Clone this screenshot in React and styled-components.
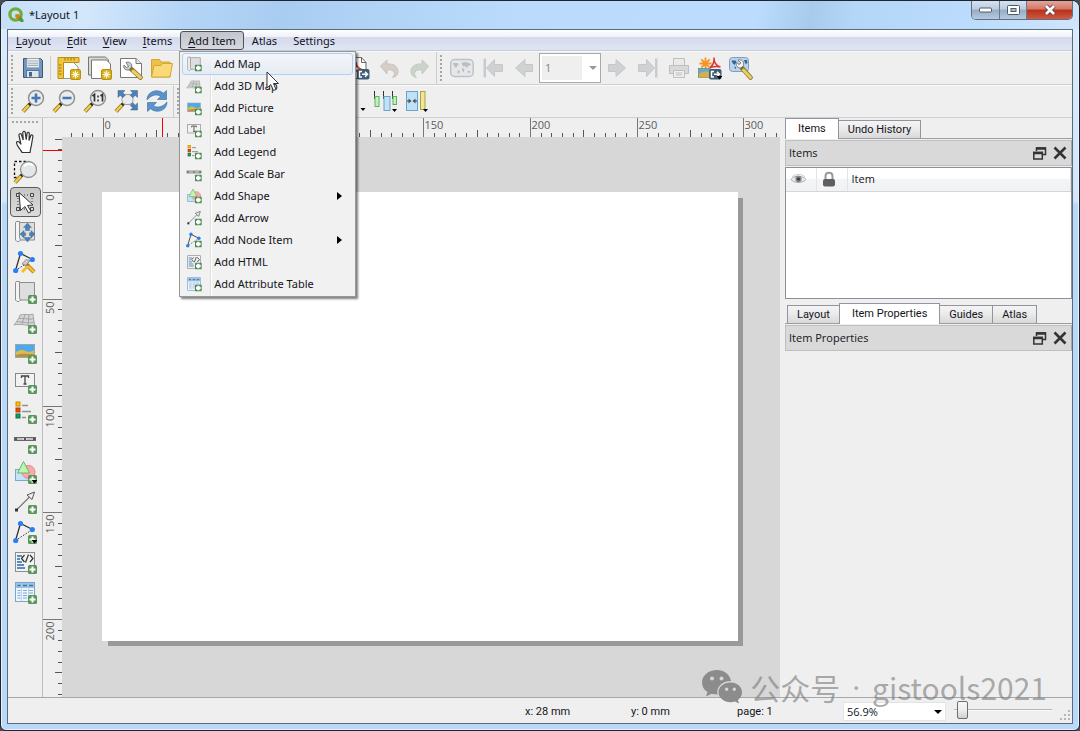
import React from "react";
import styled, { createGlobalStyle, css } from "styled-components";

const GlobalStyle = createGlobalStyle`
  * {
    box-sizing: border-box;
  }

  body {
    margin: 0;
    background: #4a4e55;
    color: #14141c;
    font-family: "Open Sans", "Noto Sans", sans-serif;
    font-size: 11px;
    line-height: 16px;
  }

  button,
  input,
  select {
    font: inherit;
    color: inherit;
  }
`;

const Window = styled.div`
  display: flex;
  flex-direction: column;
  min-height: 100vh;
  padding: 0 6px 6px;
  border: 1px solid #20242c;
  border-radius: 8px 8px 6px 6px;
  background: linear-gradient(180deg, #d9ebfc 0, #d3e7fb 200px, #b8d8f8 204px, #b8d9f9 100%);
  box-shadow: inset 0 0 0 1px #e6f3ff;
  overflow: hidden;
`;

const TitleBar = styled.header`
  display: flex;
  align-items: flex-start;
  height: 28px;
  margin: 0 -6px;
  padding: 0 6px 0 7px;
  background: linear-gradient(
    100deg,
    #c5dff9 0%,
    #d3e7fb 8%,
    #b4d5f6 17%,
    #a9cdf1 26%,
    #b0d3f6 35%,
    #badbfb 48%,
    #bbdcfc 70%,
    #a8cbec 75%,
    #b4d6f7 79%,
    #bbdcfc 90%,
    #cfe5fb 100%
  );
`;

const Title = styled.h1`
  display: flex;
  align-items: center;
  gap: 5px;
  flex: 1;
  height: 28px;
  margin: 0;
  font-family: "Noto Sans", sans-serif;
  font-size: 11px;
  font-weight: 400;
`;

const Controls = styled.div`
  display: flex;
  border: 1px solid #5f7083;
  border-top: none;
  border-radius: 0 0 5px 5px;
  overflow: hidden;
`;

const ControlButton = styled.button`
  display: flex;
  align-items: center;
  justify-content: center;
  width: ${(p) => (p.$close ? "46px" : "27px")};
  height: 18px;
  padding: 0;
  border: none;
  border-left: ${(p) => (p.$first ? "none" : "1px solid #6a7a8c")};
  background: ${(p) =>
    p.$close
      ? "linear-gradient(180deg, #e3a598 0%, #d5776a 45%, #b8301c 50%, #cf5a40 100%)"
      : "linear-gradient(180deg, #d5e2ef 0%, #bccde0 45%, #97adc5 50%, #b5cae0 100%)"};
`;

const Client = styled.div`
  display: flex;
  flex-direction: column;
  flex: 1;
  border: 1px solid #5d6a78;
  background: #efefef;
`;

const MenuBar = styled.nav`
  display: flex;
  height: 21px;
  background: linear-gradient(180deg, #ffffff 0%, #eef1f8 33%, #d5daec 36%, #dfe4f3 95%);
  border-bottom: 1px solid #c9cbd2;
  font-family: "Noto Sans", sans-serif;
`;

const MenuSlot = styled.div`
  position: relative;
  padding-top: 1px;
`;

const MenuButton = styled.button`
  height: 19px;
  padding: 0 7px;
  border: 1px solid transparent;
  border-radius: 3px;
  background: none;

  ${(p) =>
    p.$open &&
    css`
      border-color: #4f5058;
      background: linear-gradient(180deg, #c3c5cd 0%, #d6d8e0 100%);
    `}

  u {
    text-underline-offset: 2px;
  }
`;

const Menu = styled.ul`
  position: absolute;
  z-index: 5;
  top: 21px;
  left: -1px;
  width: 177px;
  margin: 0;
  padding: 1px 2px;
  list-style: none;
  border: 1px solid #979797;
  background: linear-gradient(90deg, #f1f1f1 30px, #e0e0e0 30px, #e0e0e0 31px, #ffffff 31px, #ffffff 32px, #f1f1f1 32px);
  box-shadow: 2px 2px 2px rgba(0, 0, 0, 0.5);
`;

const MenuItem = styled.button`
  display: flex;
  align-items: center;
  gap: 12px;
  width: 100%;
  height: 22px;
  padding: 0 10px 0 3px;
  border: 1px solid ${(p) => (p.$active ? "#aecff7" : "transparent")};
  border-radius: 3px;
  background: ${(p) =>
    p.$active ? "linear-gradient(180deg, rgba(244, 247, 251, 0.8), rgba(226, 234, 244, 0.8))" : "none"};
  text-align: left;
`;

const MenuText = styled.span`
  flex: 1;
`;

const Pointer = styled.svg`
  position: absolute;
  z-index: 6;
  top: 41px;
  left: 86px;
`;

const Toolbar = styled.div`
  display: flex;
  align-items: center;
  height: ${(p) => (p.$last ? "33px" : "34px")};
  border-bottom: 1px solid #cfcfcf;
  box-shadow: inset 0 1px 0 #fafafa;
`;

const Grip = styled.span`
  width: 3px;
  height: 26px;
  margin: 0 3px;
  background: radial-gradient(circle at 1px 1px, #a6a6a6 1px, transparent 1px) 0 0 / 3px 4px;
`;

const Divider = styled.span`
  width: 1px;
  height: ${(p) => (p.$tall ? "32px" : "24px")};
  margin: ${(p) => (p.$tall ? "0 0 0 1px" : "0 2px")};
  background: #cdcdcd;
`;

const ToolButton = styled.button`
  display: flex;
  align-items: center;
  justify-content: center;
  width: 31px;
  height: 30px;
  padding: 0;
  border: 1px solid transparent;
  border-radius: 4px;
  background: none;

  ${(p) =>
    p.$pressed &&
    css`
      border-color: #5b5b5b;
      background: linear-gradient(180deg, #c6c6c6 0%, #dcdcdc 100%);
    `}

  &:disabled {
    opacity: 0.5;
  }
`;

const SelectBox = styled.label`
  display: flex;
  position: relative;
  width: ${(p) => p.$width};
  height: ${(p) => p.$height};
  border: 1px solid ${(p) => p.$border};
  background: #ffffff;

  &::after {
    content: "";
    position: absolute;
    top: 50%;
    right: 3px;
    margin-top: -2px;
    border: 4px solid transparent;
    border-top-color: ${(p) => p.$arrow};
    border-bottom: none;
    pointer-events: none;
  }
`;

const Select = styled.select`
  appearance: none;
  width: 100%;
  margin: ${(p) => (p.$inset ? "2px 18px 2px 2px" : "0")};
  padding: 0 3px;
  border: none;
  background: ${(p) => (p.$inset ? "#efefef" : "transparent")};
  color: ${(p) => (p.$inset ? "#8c8070" : "#14141c")};
  opacity: 1;
`;

const Main = styled.main`
  display: flex;
  flex: 1;
`;

const SideBar = styled.div`
  display: flex;
  flex-direction: column;
  align-items: center;
  width: 35px;
  border-right: 1px solid #bdbdbd;
`;

const SideGrip = styled.span`
  width: 27px;
  height: 3px;
  margin: 3px 0;
  background: radial-gradient(circle at 1px 1px, #a6a6a6 1px, transparent 1px) 0 0 / 4px 3px;
`;

const View = styled.div`
  display: grid;
  grid-template: 19px 1fr / 19px 1fr;
  flex: 1;
  min-width: 0;
`;

const RulerSvg = styled.svg`
  display: block;
  width: 100%;
  height: 100%;
  min-width: 0;
  min-height: 0;
  font-size: 11px;
  fill: #5c5c5c;
  overflow: hidden;
`;

const Canvas = styled.div`
  padding: 55px 40px 50px;
  background: #d7d7d7;
  overflow: hidden;
`;

const Paper = styled.div`
  width: 636px;
  height: 449px;
  background: #ffffff;
  box-shadow: 5px 5px 0 #999999;
  clip-path: polygon(0 0, 100% 0, 100% 6px, 110% 6px, 110% 110%, 6px 110%, 6px 100%, 0 100%);
`;

const Dock = styled.aside`
  display: flex;
  flex-direction: column;
  width: 287px;
  margin-left: 5px;
`;

const Tabs = styled.div`
  display: flex;
  align-items: flex-end;
  height: 21px;
  margin-bottom: 1px;
  padding-left: ${(p) => (p.$indent ? "2px" : "0")};
  border-bottom: 1px solid #9c9ca4;
  font-family: Roboto, sans-serif;
`;

const Tab = styled.button`
  height: ${(p) => (p.$active ? "21px" : "18px")};
  margin-bottom: ${(p) => (p.$active ? "-1px" : "0")};
  margin-right: -1px;
  padding: 0 ${(p) => (p.$active ? "12px" : "9px")};
  border: 1px solid #9494a0;
  border-bottom: none;
  background: ${(p) => (p.$active ? "#ffffff" : "linear-gradient(180deg, #f4f4f4 0%, #ebebeb 45%, #d9d9d9 100%)")};
`;

const DockTitle = styled.div`
  display: flex;
  align-items: center;
  gap: 6px;
  height: 26px;
  padding: 0 4px 0 3px;
  border: 1px solid #bfbfbf;
  border-right-color: #a8a8a8;
  background: #d9d9d9;
`;

const DockName = styled.h2`
  flex: 1;
  margin: 0;
  font-size: 11px;
  font-weight: 400;
`;

const IconButton = styled.button`
  display: flex;
  padding: 0;
  border: none;
  background: none;
`;

const Tree = styled.div`
  height: 132px;
  margin: 1px 0 4px;
  border: 1px solid #8b8f98;
  background: #ffffff;
`;

const ItemTable = styled.table`
  width: 100%;
  border-collapse: collapse;
`;

const HeadCell = styled.th`
  width: ${(p) => p.$width || "auto"};
  height: 23px;
  padding: 0 4px;
  border-right: 1px solid #e3e4e6;
  border-bottom: 1px solid #d5d5d5;
  background: linear-gradient(180deg, #ffffff 0%, #ffffff 45%, #f3f4f6 50%, #f1f2f4 100%);
  font-weight: 400;
  text-align: left;

  svg {
    display: block;
  }
`;

const StatusBar = styled.footer`
  display: flex;
  align-items: center;
  justify-content: flex-end;
  height: 26px;
  padding-top: 2px;
  border-top: 1px solid #a3a8ae;
`;

const StatusText = styled.span`
  width: 106px;
  font-family: Roboto, sans-serif;
`;

const ZoomSlider = styled.input`
  appearance: none;
  width: 98px;
  height: 18px;
  margin: 0 8px 4px;
  background: linear-gradient(180deg, transparent 8px, #b5b5b5 8px, #b5b5b5 9px, #fafafa 9px, #fafafa 10px, transparent 10px);

  &::-webkit-slider-thumb {
    appearance: none;
    width: 11px;
    height: 18px;
    border: 1px solid #6d6d6d;
    border-radius: 2px;
    background: linear-gradient(180deg, #f7f7f7 0%, #eeeeee 50%, #cfcfcf 100%);
  }
`;

const Watermark = styled.div`
  position: absolute;
  z-index: 4;
  right: 33px;
  bottom: 22px;
  display: flex;
  align-items: center;
  gap: 8px;
  color: rgba(120, 120, 120, 0.6);
  font-family: "Noto Sans CJK SC", sans-serif;
  font-size: 30px;
  line-height: 44px;
  pointer-events: none;
`;

const Account = styled.span`
  display: flex;
  gap: 12px;
`;

const Dot = styled.span`
  font-family: "Open Sans", sans-serif;
`;

function Plus({ solid = true }) {
  return solid ? (
    <g>
      <rect x="15" y="15" width="9" height="9" rx="1.5" fill="#5a965a" />
      <path d="M19.5 16.5v6M16.5 19.5h6" stroke="#fff" strokeWidth="2" />
    </g>
  ) : (
    <g>
      <rect x="13.5" y="13" width="10" height="10" rx="1" fill="#4d8b55" />
      <path d="M18.5 14.5v7M15 18h7" stroke="#fff" strokeWidth="3.6" />
    </g>
  );
}

const Drop = () => <path d="M18.5 20h6l-3 3.5z" fill="#000" />;

const Handle = () => (
  <g>
    <path d="M9 15 2 22.5" stroke="#8a6d1c" strokeWidth="4" />
    <path d="M8 16 2 22.5" stroke="#f4cf4a" strokeWidth="2.4" />
    <path d="M10.5 13.5 8 16" stroke="#222" strokeWidth="3" />
  </g>
);

const Lens = () => (
  <g>
    <Handle />
    <circle cx="15" cy="9" r="7.5" fill="#e9ebec" stroke="#8e9294" strokeWidth="1.5" />
  </g>
);

const Star = () => (
  <g>
    <rect x="13.5" y="13.5" width="10" height="10" rx="1.5" fill="#d5ac1e" stroke="#b8920f" />
    <path d="M18.5 14.5v8M14.5 18.5h8M15.8 15.8l5.4 5.4M21.2 15.8l-5.4 5.4" stroke="#fff7d0" strokeWidth="1.2" />
  </g>
);

const Export = () => (
  <g>
    <rect x="11" y="13" width="12.5" height="10.5" rx="2" fill="#3f5d76" />
    <path d="M16 15.5h-2.5v5.5h2.500M16 18.3h5M19 15.8l2.5 2.5-2.5 2.5" fill="none" stroke="#fff" strokeWidth="1.5" />
  </g>
);

const Nodes = () => (
  <g>
    <path d="M2.5 20.5 7.5 3.5 19.5 9.5" fill="none" stroke="#333" strokeWidth="1.3" />
    <path d="M2.5 20.5 19.5 9.5" stroke="#333" strokeWidth="1" strokeDasharray="1.5 1.5" />
    <circle cx="2.7" cy="20.5" r="2.6" fill="#2a7ff0" />
    <circle cx="7.5" cy="3.5" r="2.6" fill="#2a7ff0" />
    <circle cx="19.3" cy="9.5" r="2.6" fill="#2a7ff0" />
  </g>
);

const MapSheet = () => (
  <g stroke="#8e8e8e">
    <path d="M6.5 2.5h15v17.5h-15z" fill="#dedede" />
    <path d="M3 1.5h3.5v16l1 2.5-1.5 1.5H4L2.5 20V2.5z" fill="#f4f4f4" />
  </g>
);

const World = () => (
  <g>
    <rect x="0.7" y="3.5" width="22.5" height="17" rx="4" fill="#dde1e4" stroke="#8f979e" strokeWidth="1.5" />
    <path
      d="M3 7h4l2 1-2 2-1 2-2-2zM8 14l2 1-1 3-1.5-1.5zM11.5 7l3-1 5 1 1.5 2-3 1-1 2-2-2-2 .5zM12 12l2.5 1-1 3.5-1.5-2zM18 14.5l2.5 1-1 1.5-2-.5z"
      fill="#848e96"
    />
  </g>
);

const ArrowLeft = () => <path d="M3.5 12 13 3.5v5h7.5v7H13v5z" fill="#b0b5b9" stroke="#9da3a8" />;

const ToEnd = () => (
  <g>
    <path d="M2.5 2.5h2.5v19H2.5z" fill="#a5abb0" />
    <path d="m5.5 12 8-8.500v5h8v7h-8v5z" fill="#b0b5b9" stroke="#9da3a8" />
  </g>
);

const glyphs = {
  save: (
    <g>
      <path d="M2.5 2.5h17l2 2v17h-19z" fill="#6c98c6" stroke="#44566b" />
      <rect x="6" y="2.5" width="12" height="9" fill="#eef1f4" stroke="#9aa7b5" strokeWidth=".6" />
      <path d="M7 5h10M7 7.2h10M7 9.4h10" stroke="#a4abb4" strokeWidth="1.1" />
      <rect x="5.5" y="14.5" width="12.5" height="7" fill="#dfe4ea" stroke="#52667e" strokeWidth=".8" />
      <rect x="8" y="16" width="3" height="4.5" fill="#3f6596" />
    </g>
  ),
  newLayout: (
    <g>
      <path d="M6.5 6.5h10l4.5 4.5v11.5H6.5z" fill="#fff" stroke="#999" />
      <path d="M1 1.5h21v5H6.5v16H1z" fill="#f1c53b" stroke="#b98e16" />
      <path d="M8 2v2.5M11 2v2.5M14 2v2.5M17 2v2.5M2 9h2.5M2 12h2.5M2 15h2.5M2 18h2.5" stroke="#9c7508" />
      <Star />
    </g>
  ),
  duplicate: (
    <g>
      <path d="M.5 1h17l3 3v15H.5z" fill="#d8d8d8" stroke="#777" />
      <path d="M3.5 4h15l4 4v14.5h-19z" fill="#fff" stroke="#777" />
      <Star />
    </g>
  ),
  manager: (
    <g>
      <path d="M1.5 2.5h15.5l5.5 5v14h-21z" fill="#fff" stroke="#777" />
      <path d="M17 2.5v5h5.5" fill="#e5e5e5" stroke="#777" />
      <path d="m11 12 10.5 9.5" stroke="#8c7321" strokeWidth="4.5" strokeLinecap="round" />
      <path d="m14 15 7.5 6.5" stroke="#ebce68" strokeWidth="3" strokeLinecap="round" />
      <path d="M7 6.5c3.5-1.5 6.5 1 5.5 5l-3 2.5C6 14.5 4 12 5 9l2.5 2.5 2-1z" fill="#c9ced3" stroke="#666" strokeWidth=".8" />
    </g>
  ),
  folder: (
    <g stroke="#d3a730">
      <path d="M1.5 21V3.5h8l1.5 2.5h9v15z" fill="#eec04a" />
      <path d="M1.5 21 4 9.5h7l1.5-2h10L20 21z" fill="#f9d978" />
    </g>
  ),
  pdf: (
    <g>
      <path d="M3.5 1.5h12l4.5 5v16H3.5z" fill="#fff" stroke="#666" />
      <path d="M15.5 1.5v5H20" fill="none" stroke="#666" />
      <path d="M5 18c4-4 5-8 5-12 0 5 4 8 9 8-5-1-10 1-14 4z" fill="none" stroke="#d8322a" strokeWidth="1.5" />
      <Export />
    </g>
  ),
  undo: (
    <path d="M3.5 10 10 4v4c7-.5 11 2.5 11 7.5 0 3-2 5.5-5.5 6 2-2 2.5-4 1.5-5.5-1-2-3.5-2.5-7-2v4z" fill="#c0aca0" stroke="#a5978e" />
  ),
  redo: (
    <path d="M20.5 10 14 4v4C7 7.5 3 10.5 3 15.5c0 3 2 5.5 5.5 6-2-2-2.5-4-1.5-5.5 1-2 3.5-2.5 7-2v4z" fill="#a9bba8" stroke="#97a297" />
  ),
  world: <World />,
  first: <ToEnd />,
  prev: <ArrowLeft />,
  next: (
    <g transform="matrix(-1 0 0 1 24 0)">
      <ArrowLeft />
    </g>
  ),
  last: (
    <g transform="matrix(-1 0 0 1 24 0)">
      <ToEnd />
    </g>
  ),
  print: (
    <g stroke="#8f8f8f">
      <path d="M6.5 2.5h11v7h-11z" fill="#e6e6e6" />
      <path d="M2.5 9.5h19v8h-19z" fill="#c5c5c5" />
      <path d="M6.5 14.5h11v7h-11z" fill="#f3f3f3" />
      <path d="M8.5 17h7M8.5 19h7" />
    </g>
  ),
  exportAtlas: (
    <g>
      <path d="M7.5 1.5v12M1.5 7.5h12M3.3 3.3l8.4 8.4M11.7 3.3 3.3 11.7" stroke="#f5941e" strokeWidth="1.8" />
      <path d="M12 11.5c4-3 4.5-6 4-10 0 5 2.5 8.500 6.5 9.5-4-1-7-.5-10.5.5z" fill="none" stroke="#e3342a" strokeWidth="1.5" />
      <rect x=".5" y="12.5" width="12" height="9" fill="#5aaade" stroke="#7d7040" strokeWidth=".6" />
      <path d="M1 18c3-3 7-3 11-2v5.500H1z" fill="#d3b04a" />
      <Export />
      <Drop />
    </g>
  ),
  atlasSettings: (
    <g>
      <rect x=".5" y="1.5" width="19" height="14" rx="3" fill="#b9d3ec" stroke="#7d9fc0" />
      <path d="M2.5 4.5h4l1 1.500-2 3-2-2zM5 10.500l2 .5-.5 2.500zM15 4h3l.5 3-2 1z" fill="#39638f" />
      <path d="m13 12 8.5 9.5" stroke="#8a741f" strokeWidth="4.5" strokeLinecap="round" />
      <path d="m14.5 14 7 7.5" stroke="#e9cf6a" strokeWidth="3" strokeLinecap="round" />
      <path d="M9 4c3.5-1 6.5 1.500 5.5 5.500L12 12c-3.5 0-5.5-2.5-4.5-5.500L10 8.500 12 7z" fill="#f2f4f6" stroke="#666" strokeWidth=".8" />
    </g>
  ),
  zoomIn: (
    <g>
      <Lens />
      <path d="M15 4.5v9M10.5 9h9" stroke="#4279b4" strokeWidth="2.6" />
    </g>
  ),
  zoomOut: (
    <g>
      <Lens />
      <path d="M10.5 9h9" stroke="#4279b4" strokeWidth="2.6" />
    </g>
  ),
  zoomActual: (
    <g>
      <Lens />
      <path d="m9.5 7 2-1.500v7M17.5 7l2-1.500v7" fill="none" stroke="#333" strokeWidth="1.7" />
      <path d="M14.3 6.5h1.500v2h-1.500zM14.3 10.500h1.500v2h-1.500z" fill="#333" />
    </g>
  ),
  zoomFull: (
    <g>
      <Handle />
      <rect x="8" y="5.5" width="11" height="10" rx="4" fill="#e9ebec" stroke="#9a9d9f" />
      <path
        d="M4 1.5h7L8.8 3.7l2.5 2.5-2.6 2.6-2.5-2.5L4 8.5zM23.5 1.5h-7l2.2 2.2-2.5 2.5 2.6 2.6 2.5-2.5 2.2 2.2zM23.5 21h-7l2.2-2.2-2.5-2.5 2.6-2.6 2.5 2.5 2.2-2.2z"
        fill="#4d80b5"
        stroke="#34618f"
        strokeWidth=".5"
      />
    </g>
  ),
  refresh: (
    <g fill="#5a93cb" stroke="#376b9f" strokeWidth=".6">
      <path d="M2 11C2 5 7 1.500 12 1.800c2.800.1 4.800 1 6.300 2.500L21.500 1.500v9h-9L15.500 7.500C12 4.500 6 6 2 11z" />
      <path d="M22 13c0 6-5 9.500-10 9.200-2.800-.1-4.800-1-6.300-2.500L2.500 22.500v-9h9l-3 3C12 19.500 18 18 22 13z" />
    </g>
  ),
  align: (
    <g>
      <rect x="4" y="4" width="8" height="6" fill="#b9dff5" stroke="#6e93a8" />
      <rect x="4" y="12" width="6" height="6" fill="#bdf0b8" stroke="#62a561" />
      <path d="M18.5 19h5l-2.5 3z" fill="#000" />
    </g>
  ),
  distribute: (
    <g>
      <path d="M1.5 2v8M10.5 2v8M19.5 2v8" stroke="#333" />
      <rect x="2" y="7.5" width="4" height="10" fill="#bff2bc" stroke="#62b162" />
      <rect x="11" y="7.5" width="6" height="14" fill="#bfe2f8" stroke="#6ba3c7" />
      <rect x="20" y="7.5" width="3.5" height="8" fill="#bff2bc" stroke="#62b162" />
      <path d="M19 20h5l-2.5 3z" fill="#000" />
    </g>
  ),
  resize: (
    <g>
      <rect x="2.5" y="2.5" width="11" height="19" fill="#bfe2f8" stroke="#6ba3c7" />
      <path d="M3 12h3.5M13 12H9.5" stroke="#333" />
      <path d="M4.5 9.5 7.5 12l-3 2.500zM11.500 9.500l-3 2.500 3 2.500z" fill="#555" />
      <rect x="16.5" y="2.5" width="4.5" height="18" fill="#efe791" stroke="#a8a055" />
      <path d="M19 20h5l-2.5 3z" fill="#000" />
    </g>
  ),
  pan: (
    <path
      d="M9 22.5c-1-3-5-6-5.5-9.5-.3-1.6 1.7-2 2.7-.8L8 14.5 6 5.5c-.4-2 2-2.5 2.500-.8L10.200 10 9.800 3C9.700 1 12 .8 12.300 2.600l.9 7L14 3.500c.2-1.700 2.300-1.500 2.300.3L16 10.500l1.700-4.700c.6-1.500 2.500-.9 2.200.7L18.600 14c-.3 3-1.300 4.500-1.500 8.500z"
      fill="#fff"
      stroke="#333"
      strokeWidth="1.2"
    />
  ),
  zoomTool: (
    <g>
      <path d="M13 1.5H1.5v16H8" fill="none" stroke="#111" strokeDasharray="2.5 2" strokeWidth="1.3" />
      <Handle />
      <circle cx="15.5" cy="9.5" r="8" fill="#e4e7e7" stroke="#8e9294" strokeWidth="1.3" />
      <path d="M11 6.5c2-3 7-3.5 9-.5" fill="none" stroke="#fff" strokeWidth="2" />
    </g>
  ),
  selectTool: (
    <g>
      <path d="M5 5h14M5 19h14M5 5v14M19 5v14" stroke="#333" strokeDasharray="1 2" />
      <path d="M3.5 3.5h3v3h-3zM17.5 3.5h3v3h-3zM3.5 17.5h3v3h-3zM17.5 17.5h3v3h-3z" fill="#ddd" stroke="#444" />
      <path d="m6 2.5 14 12.5-5.5.5 3.5 6-2.5 1.500-3.5-6.500-4.500 4z" fill="#fff" stroke="#333" />
    </g>
  ),
  moveContent: (
    <g>
      <MapSheet />
      <path
        d="m14.5 3 4 4.500h-2v3h-4v-3h-2zM14.500 22l-3.500-4.500h7zM7 14l4-3.500v2.300h1.500v3H11V18zM22 14l-4-3.500v2.300h-1.500v3H18V18z"
        fill="#4d80b5"
        stroke="#34618f"
        strokeWidth=".4"
      />
    </g>
  ),
  editNodes: (
    <g>
      <Nodes />
      <path d="m12 13 9 9" stroke="#a06d10" strokeWidth="4" />
      <path d="m15 16 6 6M9 22l6-6" stroke="#f2bd35" strokeWidth="2.8" />
      <path d="m9 14 4-4.500 4 1-4 5z" fill="#ccc" stroke="#777" strokeWidth=".7" />
    </g>
  ),
  map: <MapSheet />,
  map3d: (
    <g stroke="#999" strokeWidth=".8">
      <path d="M7 5c5-2 9 1 13-1l1.500 11c-6 2-12-2-20.500 0C3 12 6 9 7 5z" fill="#d5d5d5" />
      <path d="M6 8.500c5-1 10 2 14.500 0M3.500 12c6-1 12 2.500 17.500 0M12 4.500 9 14M16 5l-1 11" fill="none" />
    </g>
  ),
  picture: (
    <g>
      <rect x="2.5" y="4.5" width="19" height="13" fill="#4ba9ec" stroke="#9aa6ae" />
      <path d="M3 12c4-3 8-2.500 11-.5 3 1 5-.5 7-1V17H3z" fill="#d9ba55" />
      <path d="M3 15c5-2 12-1 18-1v3H3z" fill="#b5913c" />
    </g>
  ),
  label: (
    <g>
      <rect x="2.5" y="3.5" width="19" height="13" fill="#f2f2f2" stroke="#888" />
      <path d="M8.5 8V6h7v2M12 6v8M10.5 14h3" fill="none" stroke="#444" strokeWidth="1.3" />
    </g>
  ),
  legend: (
    <g>
      <rect x="3" y="2" width="4" height="4" fill="#ffc000" stroke="#c88d00" />
      <rect x="3" y="8" width="4" height="4" fill="#ee4b10" stroke="#b33a0c" />
      <rect x="3" y="14" width="4" height="4" fill="#10a060" stroke="#0a7544" />
      <path d="M9 5.500h6M9 11.500h9M9 17.500h4" stroke="#8f8f8f" strokeWidth="1.5" />
    </g>
  ),
  scalebar: (
    <g>
      <rect x="1.5" y="7.5" width="21" height="3" fill="#ddd" stroke="#666" />
      <path d="M4 9h6M14 9h6" stroke="#aaa" strokeWidth="1" />
      <path d="M2 9h2M11 9h2M20 9h2" stroke="#555" strokeWidth="2" />
    </g>
  ),
  shape: (
    <g>
      <rect x="2.5" y="9.5" width="13" height="11" fill="#c4e3f9" stroke="#7ca9cb" />
      <circle cx="15.5" cy="12" r="6.5" fill="#f9aaaa" stroke="#e28787" />
      <path d="m10.5 1.500 6 11.500h-12z" fill="#bdf5b4" stroke="#6ab567" />
    </g>
  ),
  arrow: (
    <g>
      <path d="M3.5 20 17.5 6" stroke="#777" strokeWidth="1.2" />
      <path d="m21.5 2-2.500 7.500-5-4.500z" fill="#eee" stroke="#555" />
      <rect x="2" y="18.5" width="3" height="3" fill="#333" />
    </g>
  ),
  nodes: <Nodes />,
  html: (
    <g>
      <rect x="2.5" y="2.5" width="19" height="19" fill="#f2f2f2" stroke="#8d8d8d" />
      <path d="M4 6h5M4 9h3M4 12h5M4 15h7M4 18h8" stroke="#5b8cc0" strokeWidth="1.8" />
      <path d="m11.5 5-3 3.500 3 3.500M17 5l3 3.500-3 3.500M15.500 4.500l-3 8" fill="none" stroke="#333" strokeWidth="1.2" />
    </g>
  ),
  table: (
    <g>
      <rect x="2.5" y="2.5" width="19" height="19" fill="#eef5fb" stroke="#7ea3c8" />
      <path d="M3 3h18v5H3z" fill="#9cc3e8" />
      <path d="M4.5 5.500h3M10 5.500h4M16 5.500h4" stroke="#3f74a9" strokeWidth="1.5" />
      <path d="M4.5 10.500h3M10 10.500h4M16 10.500h4M4.500 13h3M10 13h4M16 13h4M4.500 15.500h3M10 15.500h4M4.500 18h3M10 18h4" stroke="#7fabda" />
      <path d="M8.5 3v18.500M15.500 3v18.500" stroke="#a9c6e2" strokeWidth=".7" />
    </g>
  ),
};

function Icon({ name, size = 24, plus, drop }) {
  return (
    <svg width={size} height={size} viewBox="0 0 24 24" fill="none" aria-hidden="true">
      {glyphs[name]}
      {plus && <Plus solid={size > 16} />}
      {drop && <Drop />}
    </svg>
  );
}

function Tool({ name, label, ...rest }) {
  return (
    <ToolButton aria-label={label || name} {...rest}>
      <Icon name={name} />
    </ToolButton>
  );
}

const addItems = [
  ["map", "Add Map"],
  ["map3d", "Add 3D Map"],
  ["picture", "Add Picture"],
  ["label", "Add Label"],
  ["legend", "Add Legend"],
  ["scalebar", "Add Scale Bar"],
  ["shape", "Add Shape", true],
  ["arrow", "Add Arrow"],
  ["nodes", "Add Node Item", true],
  ["html", "Add HTML"],
  ["table", "Add Attribute Table"],
];

const menus = [
  ["L", "ayout"],
  ["E", "dit"],
  ["V", "iew"],
  ["I", "tems"],
  ["A", "dd Item", true],
  ["", "Atlas"],
  ["", "Settings"],
];

// one tick every 5 mm, a longer one at 25 and a full line at 50
const MM = 2.135;
// numbers stop at the edge of the A4 page
const LAST_LABEL = 300;

function Ruler({ vertical, origin, marker, from, to }) {
  const ticks = [];
  for (let mm = from; mm <= to; mm += 5) {
    const pos = Math.round(origin + mm * MM) + 0.5;
    const major = mm % 50 === 0;
    const len = major ? 19 : mm % 25 === 0 ? 7 : 4;
    ticks.push(
      <g key={mm}>
        <path
          d={vertical ? `M${19 - len} ${pos}H19` : `M${pos} ${19 - len}V19`}
          stroke={major ? "#777" : "#555"}
        />
        {major && mm >= 0 && mm <= (vertical ? 200 : LAST_LABEL) && (
          <text
            x={vertical ? 0 : pos + 1}
            y={vertical ? 0 : 11}
            textAnchor={vertical ? "end" : "start"}
            transform={vertical ? `translate(11 ${pos + 2}) rotate(-90)` : undefined}
          >
            {mm}
          </text>
        )}
      </g>
    );
  }
  return (
    <RulerSvg>
      {ticks}
      <path d={vertical ? `M0 ${marker}H19` : `M${marker} 0V19`} stroke="#f00000" />
    </RulerSvg>
  );
}

function PanelTitle({ children }) {
  return (
    <DockTitle>
      <DockName>{children}</DockName>
      <IconButton aria-label="Float panel">
        <svg width="15" height="15" viewBox="0 0 15 15" fill="none" stroke="#333" strokeWidth="1.5">
          <path d="M4.5 5V2h9v6.500H11" />
          <path d="M4 2.500h10" strokeWidth="2.5" />
          <rect x="1.8" y="6.5" width="8.5" height="6.5" fill="#d9d9d9" />
          <path d="M1 7h10" strokeWidth="2.5" />
        </svg>
      </IconButton>
      <IconButton aria-label="Close panel">
        <svg width="14" height="14" viewBox="0 0 14 14" stroke="#333" strokeWidth="2.6">
          <path d="m1.5 1.500 11 11M12.500 1.500l-11 11" />
        </svg>
      </IconButton>
    </DockTitle>
  );
}

export default function App() {
  return (
    <>
      <GlobalStyle />
      <Window>
        <TitleBar>
          <Title>
            <svg width="16" height="16" viewBox="0 0 17 17" fill="none">
              <circle cx="8" cy="8" r="6" stroke="#6fae3b" strokeWidth="3.5" />
              <path d="M8 8h3.500l5 5.500V16h-3L8 10.500z" fill="#5a9632" />
              <path d="M8 8h3l2 2-2.500 2.500L8 10.500z" fill="#ee7913" />
            </svg>
            *Layout 1
          </Title>
          <Controls>
            <ControlButton $first aria-label="Minimize">
              <svg width="13" height="6" viewBox="0 0 13 6">
                <rect x=".5" y="1" width="12" height="4" rx="1" fill="#fff" stroke="#4f5a68" />
              </svg>
            </ControlButton>
            <ControlButton aria-label="Maximize">
              <svg width="13" height="11" viewBox="0 0 13 11">
                <rect x=".5" y=".5" width="12" height="9" rx="1" fill="#fff" stroke="#4f5a68" />
                <rect x="4" y="3.5" width="5" height="3" fill="#a9bfd6" stroke="#4f5a68" />
              </svg>
            </ControlButton>
            <ControlButton $close aria-label="Close">
              <svg width="14" height="12" viewBox="0 0 14 12">
                <path d="m3 2 8 8M11 2l-8 8" stroke="#5b4248" strokeWidth="4.5" />
                <path d="m3 2 8 8M11 2l-8 8" stroke="#fff" strokeWidth="2.6" />
              </svg>
            </ControlButton>
          </Controls>
        </TitleBar>

        <Client>
          <MenuBar>
            {menus.map(([key, rest, open]) => (
              <MenuSlot key={rest}>
                <MenuButton $open={open}>
                  {key && <u>{key}</u>}
                  {rest}
                </MenuButton>
                {open && (
                  <>
                    <Menu>
                      {addItems.map(([icon, text, sub], i) => (
                        <li key={text}>
                          <MenuItem $active={i === 0}>
                            <Icon name={icon} size={16} plus />
                            <MenuText>{text}</MenuText>
                            {sub && (
                              <svg width="5" height="8" viewBox="0 0 5 8">
                                <path d="M0 0v8l5-4z" />
                              </svg>
                            )}
                          </MenuItem>
                        </li>
                      ))}
                    </Menu>
                    <Pointer width="14" height="21" viewBox="0 0 14 21">
                      <path d="M1 1v16l3.800-3.500L7.500 19.500l2.500-1-2.500-6h5z" fill="#fff" stroke="#33363d" />
                    </Pointer>
                  </>
                )}
              </MenuSlot>
            ))}
          </MenuBar>

          <Toolbar>
            <Grip />
            <Tool name="save" />
            <Divider />
            <Tool name="newLayout" label="New layout" />
            <Tool name="duplicate" />
            <Tool name="manager" />
            <Tool name="folder" />
            <Tool name="save" label="Save as template" />
            <Divider />
            <Tool name="print" />
            <Tool name="picture" label="Export as image" />
            <Tool name="html" label="Export as SVG" />
            <Tool name="table" label="Report" />
            <Divider />
            <Tool name="pdf" />
            <Tool name="undo" disabled />
            <Tool name="redo" disabled />
            <Divider $tall />
            <Grip />
            <Tool name="world" disabled />
            <Tool name="first" disabled />
            <Tool name="prev" disabled />
            <SelectBox $width="62px" $height="30px" $border="#a9a9a9" $arrow="#999999">
              <Select $inset disabled aria-label="Page">
                <option>1</option>
              </Select>
            </SelectBox>
            <Tool name="next" disabled />
            <Tool name="last" disabled />
            <Tool name="print" label="Print atlas" disabled />
            <Tool name="exportAtlas" label="Export atlas" />
            <Tool name="atlasSettings" label="Atlas settings" />
          </Toolbar>
          <Toolbar $last>
            <Grip />
            <Tool name="zoomIn" />
            <Tool name="zoomOut" />
            <Tool name="zoomActual" />
            <Tool name="zoomFull" />
            <Tool name="refresh" />
            <Divider $tall />
            <Grip />
            <Tool name="shape" label="Group" />
            <Tool name="nodes" label="Ungroup" />
            <Tool name="map" label="Lock" />
            <Tool name="label" label="Unlock" />
            <Tool name="table" label="Raise" />
            <Tool name="align" />
            <Tool name="distribute" />
            <Tool name="resize" />
          </Toolbar>

          <Main>
            <SideBar>
              <SideGrip />
              <Tool name="pan" />
              <Tool name="zoomTool" />
              <Tool name="selectTool" $pressed />
              <Tool name="moveContent" />
              <Tool name="editNodes" />
              {addItems.map(([icon, text, sub]) => (
                <ToolButton key={text} aria-label={text}>
                  <Icon name={icon} plus drop={sub} />
                </ToolButton>
              ))}
            </SideBar>

            <View>
              <span />
              <Ruler origin={41} marker={100.5} from={-15} to={600} />
              <Ruler vertical origin={55} marker={13.5} from={-25} to={600} />
              <Canvas>
                <Paper />
              </Canvas>
            </View>

            <Dock>
              <Tabs>
                <Tab $active>Items</Tab>
                <Tab>Undo History</Tab>
              </Tabs>
              <PanelTitle>Items</PanelTitle>
              <Tree>
                <ItemTable>
                  <thead>
                    <tr>
                      <HeadCell $width="30px" aria-label="Visible">
                        <svg width="17" height="12" viewBox="0 0 17 12" fill="none">
                          <path d="M1 6.500C4 2 12 2 16 6.500 12 10.500 5 10.500 1 6.500z" fill="#eee" stroke="#aaa" />
                          <circle cx="8.5" cy="6" r="3.2" fill="#888" />
                          <circle cx="8.5" cy="6" r="1.5" fill="#333" />
                          <path d="M2 4C5 .5 12 .5 15 4" stroke="#ccc" />
                        </svg>
                      </HeadCell>
                      <HeadCell $width="31px" aria-label="Locked">
                        <svg width="16" height="16" viewBox="0 0 16 16" fill="none">
                          <path d="M4.5 9V5c0-4.500 7-4.500 7 0v4" stroke="#999" strokeWidth="2" />
                          <rect x="2" y="8" width="12" height="7.5" rx="2" fill="#5f5f5f" />
                        </svg>
                      </HeadCell>
                      <HeadCell>Item</HeadCell>
                    </tr>
                  </thead>
                </ItemTable>
              </Tree>
              <Tabs $indent>
                <Tab>Layout</Tab>
                <Tab $active>Item Properties</Tab>
                <Tab>Guides</Tab>
                <Tab>Atlas</Tab>
              </Tabs>
              <PanelTitle>Item Properties</PanelTitle>
            </Dock>
          </Main>

          <StatusBar>
            <StatusText>x: 28 mm</StatusText>
            <StatusText>y: 0 mm</StatusText>
            <StatusText>page: 1</StatusText>
            <SelectBox $width="103px" $height="19px" $border="#e2e3e5" $arrow="#000000">
              <Select aria-label="Zoom">
                <option>56.9%</option>
              </Select>
            </SelectBox>
            <ZoomSlider type="range" min="0" max="100" defaultValue="4" aria-label="Zoom level" />
            <svg width="12" height="20" viewBox="0 0 12 20" fill="#b5b5b5">
              <path d="M8 8h2v2H8zM8 12h2v2H8zM4 12h2v2H4zM8 16h2v2H8zM4 16h2v2H4zM0 16h2v2H0z" />
            </svg>
          </StatusBar>
        </Client>
      </Window>
      <Watermark>
        <svg width="40" height="34" viewBox="0 0 40 34">
          <path
            d="M15 0C6.500 0 0 5.500 0 12.500c0 4 2 7.300 5.500 9.500L4 26.500l5.500-2.800c2 .6 3.800.8 6 .8C14 17 20 11 29 11 28 4.500 22 0 15 0zM10 6.500a2 2 0 1 1 0 4 2 2 0 0 1 0-4zm9.500 0a2 2 0 1 1 0 4 2 2 0 0 1 0-4z"
            fill="#8c8c8c"
            fillRule="evenodd"
          />
          <path
            d="M28.500 12.500C21.500 12.500 16.500 17 16.500 22.300c0 5.500 5.500 10 12 10 1.500 0 3-.3 4.500-.7l4 2-1-3.600c2.500-2 4-4.700 4-7.700 0-5.500-5-9.800-11.500-9.800zM24.700 17.500a1.700 1.700 0 1 1 0 3.400 1.700 1.700 0 0 1 0-3.400zm7.600 0a1.700 1.700 0 1 1 0 3.400 1.700 1.700 0 0 1 0-3.400z"
            fill="#8c8c8c"
            fillRule="evenodd"
          />
        </svg>
        <Account>
          <span>公众号</span>
          <Dot>·</Dot>
          <span>gistools2021</span>
        </Account>
      </Watermark>
    </>
  );
}
